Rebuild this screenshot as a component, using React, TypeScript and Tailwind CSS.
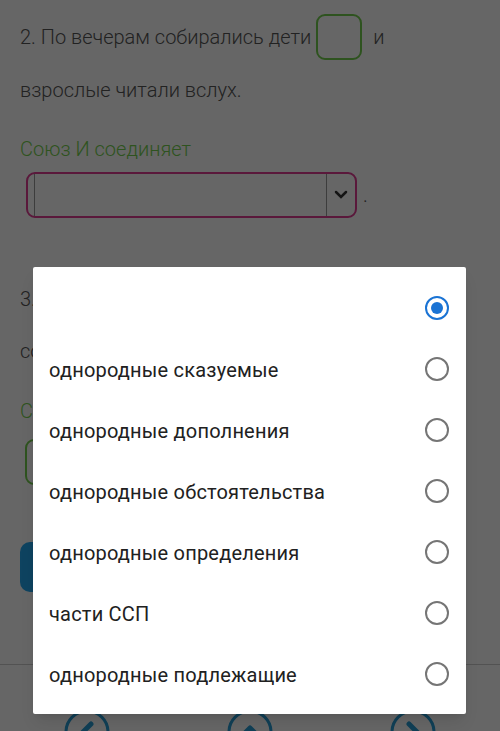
import React, { useState } from 'react';

const options = [
  '',
  'однородные сказуемые',
  'однородные дополнения',
  'однородные обстоятельства',
  'однородные определения',
  'части ССП',
  'однородные подлежащие',
];

const Radio: React.FC<{ checked: boolean }> = ({ checked }) => (
  <span
    className={`flex h-[24px] w-[24px] items-center justify-center rounded-full border-2 ${
      checked ? 'border-[#1a73d4]' : 'border-[#757575]'
    }`}
  >
    {checked && <span className="h-[12px] w-[12px] rounded-full bg-[#1a73d4]" />}
  </span>
);

const NavButton: React.FC<{ dir: 'left' | 'up' | 'right' }> = ({ dir }) => {
  const d = dir === 'left' ? 'M27 15 L19 23 L27 31' : dir === 'right' ? 'M19 15 L27 23 L19 31' : 'M15 27 L23 19 L31 27';
  return (
    <svg width="48" height="46" viewBox="0 0 46 46">
      <circle cx="23" cy="23" r="21" fill="none" stroke="#2a9fd6" strokeWidth="3" />
      <path d={d} fill="none" stroke="#2a9fd6" strokeWidth="5" strokeLinecap="round" strokeLinejoin="round" />
    </svg>
  );
};

export default function App() {
  const [selected, setSelected] = useState(0);

  return (
    <div className="relative h-[731px] w-[500px] overflow-hidden bg-white font-['Roboto',sans-serif] text-[#555]">
      {/* page behind the dialog */}
      <div className="pl-[20px] pt-[14px] text-[20px] font-light">
        <div className="flex h-[46px] items-center">
          <span>2. По вечерам собирались дети</span>
          <span className="ml-[5px] h-[46px] w-[46px] rounded-[9px] border-2 border-[#74d04e]" />
          <span className="ml-[11px]">и</span>
        </div>
        <div className="mt-[12px] flex h-[36px] items-center">взрослые читали вслух.</div>
        <div className="mt-[23px] flex h-[36px] items-center text-[#74d04e]">Союз И соединяет</div>
        <div className="mt-[5px] flex items-end">
          <div className="ml-[6px] flex h-[46px] w-[331px] items-stretch rounded-[9px] border-2 border-[#e03c94]">
            <div className="ml-[6px] w-px bg-[#999]" />
            <div className="flex-1" />
            <div className="w-px bg-[#999]" />
            <div className="flex w-[28px] items-center justify-center">
              <svg width="14" height="10" viewBox="0 0 14 10">
                <path d="M2 2 L7 7 L12 2" fill="none" stroke="#333" strokeWidth="2.5" strokeLinecap="round" />
              </svg>
            </div>
          </div>
          <span className="mb-[8px] ml-[6px]">.</span>
        </div>
        <div className="mt-[63px] flex h-[36px] items-center">3.</div>
        <div className="mt-[16px] flex h-[36px] items-center">со</div>
        <div className="mt-[24px] flex h-[36px] items-center text-[#74d04e]">Со</div>
        <div className="ml-[5px] mt-[10px] h-[46px] w-[300px] rounded-[9px] border-2 border-[#74d04e]" />
        <div className="mt-[57px] h-[50px] w-[140px] rounded-[10px] bg-[#25a8ef]" />
      </div>
      <div className="mt-[72px] h-px bg-[#ccc]" />
      <div className="mt-[44px] flex justify-between px-[63px]">
        <NavButton dir="left" />
        <NavButton dir="up" />
        <NavButton dir="right" />
      </div>

      {/* overlay */}
      <div className="absolute inset-0 bg-black/60" />

      {/* dialog */}
      <div className="absolute left-[33px] top-[267px] w-[433px] rounded-[2px] bg-white py-[10px] shadow-lg">
        {options.map((o, i) => (
          <button
            key={i}
            onClick={() => setSelected(i)}
            className="flex h-[61px] w-full items-center justify-between pl-[16px] pr-[17px] text-left text-[20px] tracking-[0.2px] text-[#212121]"
          >
            <span className="pt-[3px]">{o}</span>
            <Radio checked={selected === i} />
          </button>
        ))}
      </div>
    </div>
  );
}
